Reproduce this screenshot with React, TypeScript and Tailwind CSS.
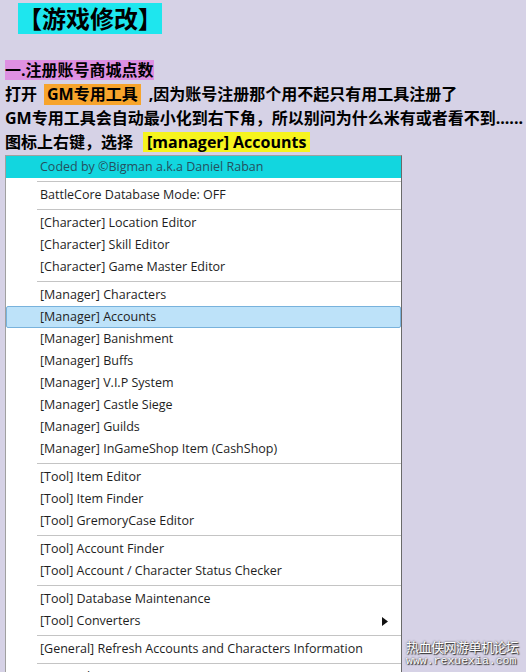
import React from 'react';

type MenuEntry = { label: string; active?: boolean; submenu?: boolean } | 'sep';

const menuEntries: MenuEntry[] = [
  'sep',
  { label: 'BattleCore Database Mode: OFF' },
  'sep',
  { label: '[Character] Location Editor' },
  { label: '[Character] Skill Editor' },
  { label: '[Character] Game Master Editor' },
  'sep',
  { label: '[Manager] Characters' },
  { label: '[Manager] Accounts', active: true },
  { label: '[Manager] Banishment' },
  { label: '[Manager] Buffs' },
  { label: '[Manager] V.I.P System' },
  { label: '[Manager] Castle Siege' },
  { label: '[Manager] Guilds' },
  { label: '[Manager] InGameShop Item (CashShop)' },
  'sep',
  { label: '[Tool] Item Editor' },
  { label: '[Tool] Item Finder' },
  { label: '[Tool] GremoryCase Editor' },
  'sep',
  { label: '[Tool] Account Finder' },
  { label: '[Tool] Account / Character Status Checker' },
  'sep',
  { label: '[Tool] Database Maintenance' },
  { label: '[Tool] Converters', submenu: true },
  'sep',
  { label: '[General] Refresh Accounts and Characters Information' },
  'sep',
  { label: '[General] Exit' },
];

const cjk = "font-['Open_Sans','Noto_Sans_CJK_SC',sans-serif]";

const ContextMenu = () => (
  <div className="ml-[5px] w-[397px] border border-[#a0a0a0] border-r-[#6a6a6a] bg-white">
    {/* 标题栏 */}
    <div className="h-[22px] flex items-center pl-[34px] bg-[#12d6df] text-[#24505e] text-[12.5px]">
      Coded by ©Bigman a.k.a Daniel Raban
    </div>
    {menuEntries.map((entry, i) =>
      entry === 'sep' ? (
        <div key={i} className="h-[6px] flex items-center pl-[31px]">
          <div className="h-px w-full bg-[#c4c4c4]" />
        </div>
      ) : entry.active ? (
        <div key={i} className="h-[22px] flex items-center pl-[33px] border border-[#78b2dc] bg-[#bde2f9] rounded-[2px]">
          {entry.label}
        </div>
      ) : (
        <div key={i} className="h-[22px] flex items-center justify-between pl-[34px] pr-[13px]">
          <span>{entry.label}</span>
          {entry.submenu && (
            <svg width="6" height="9" viewBox="0 0 6 9">
              <path d="M0 0 L6 4.5 L0 9 Z" fill="#111" />
            </svg>
          )}
        </div>
      )
    )}
  </div>
);

const App = () => {
  return (
    <div className="relative w-[526px] h-[672px] overflow-hidden bg-[#d6d2e6]">
      <div className={`${cjk} font-bold text-black`}>
        <div className="pt-[3px] pl-[18px]">
          <span className="inline-block bg-[#1ee6ee] text-[24px] leading-[31px]">【游戏修改】</span>
        </div>
        <div className="mt-[24px] pl-[5px] text-[16px] whitespace-nowrap">
          <div className="h-6 flex items-center">
            <span className="inline-block h-[20px] leading-[20px] bg-[#de90e2]">一.注册账号商城点数</span>
          </div>
          <div className="h-6 flex items-center">
            <span>打开</span>
            <span className="inline-block ml-[7px] px-[3px] h-[21px] leading-[21px] bg-[#f7a42c]">GM专用工具</span>
            <span className="ml-[8px]">,因为账号注册那个用不起只有用工具注册了</span>
          </div>
          <div className="h-6 flex items-center">
            <span>GM专用工具会自动最小化到右下角，所以别问为什么米有或者看不到......</span>
          </div>
          <div className="h-6 flex items-center">
            <span>图标上右键，选择</span>
            <span className="inline-block ml-[10px] px-[4px] h-[20px] leading-[20px] bg-[#f6f41e]">[manager] Accounts</span>
          </div>
        </div>
      </div>

      <div className="mt-[1px] font-['Open_Sans',sans-serif] text-[12.5px] text-[#1e1e1e]">
        <ContextMenu />
      </div>

      {/* 水印 */}
      <div className="absolute left-[406px] top-[638px] text-white [text-shadow:0_0_2px_#333,1px_1px_1px_#333]">
        <div className="font-['Noto_Sans_CJK_SC',sans-serif] text-[13px] leading-[17px] tracking-[-0.5px]">热血侠网游单机论坛</div>
        <div className="font-['Liberation_Mono',monospace] text-[11.5px] leading-[12px]">www.rexuexia.com</div>
      </div>
    </div>
  );
};

export default App;
